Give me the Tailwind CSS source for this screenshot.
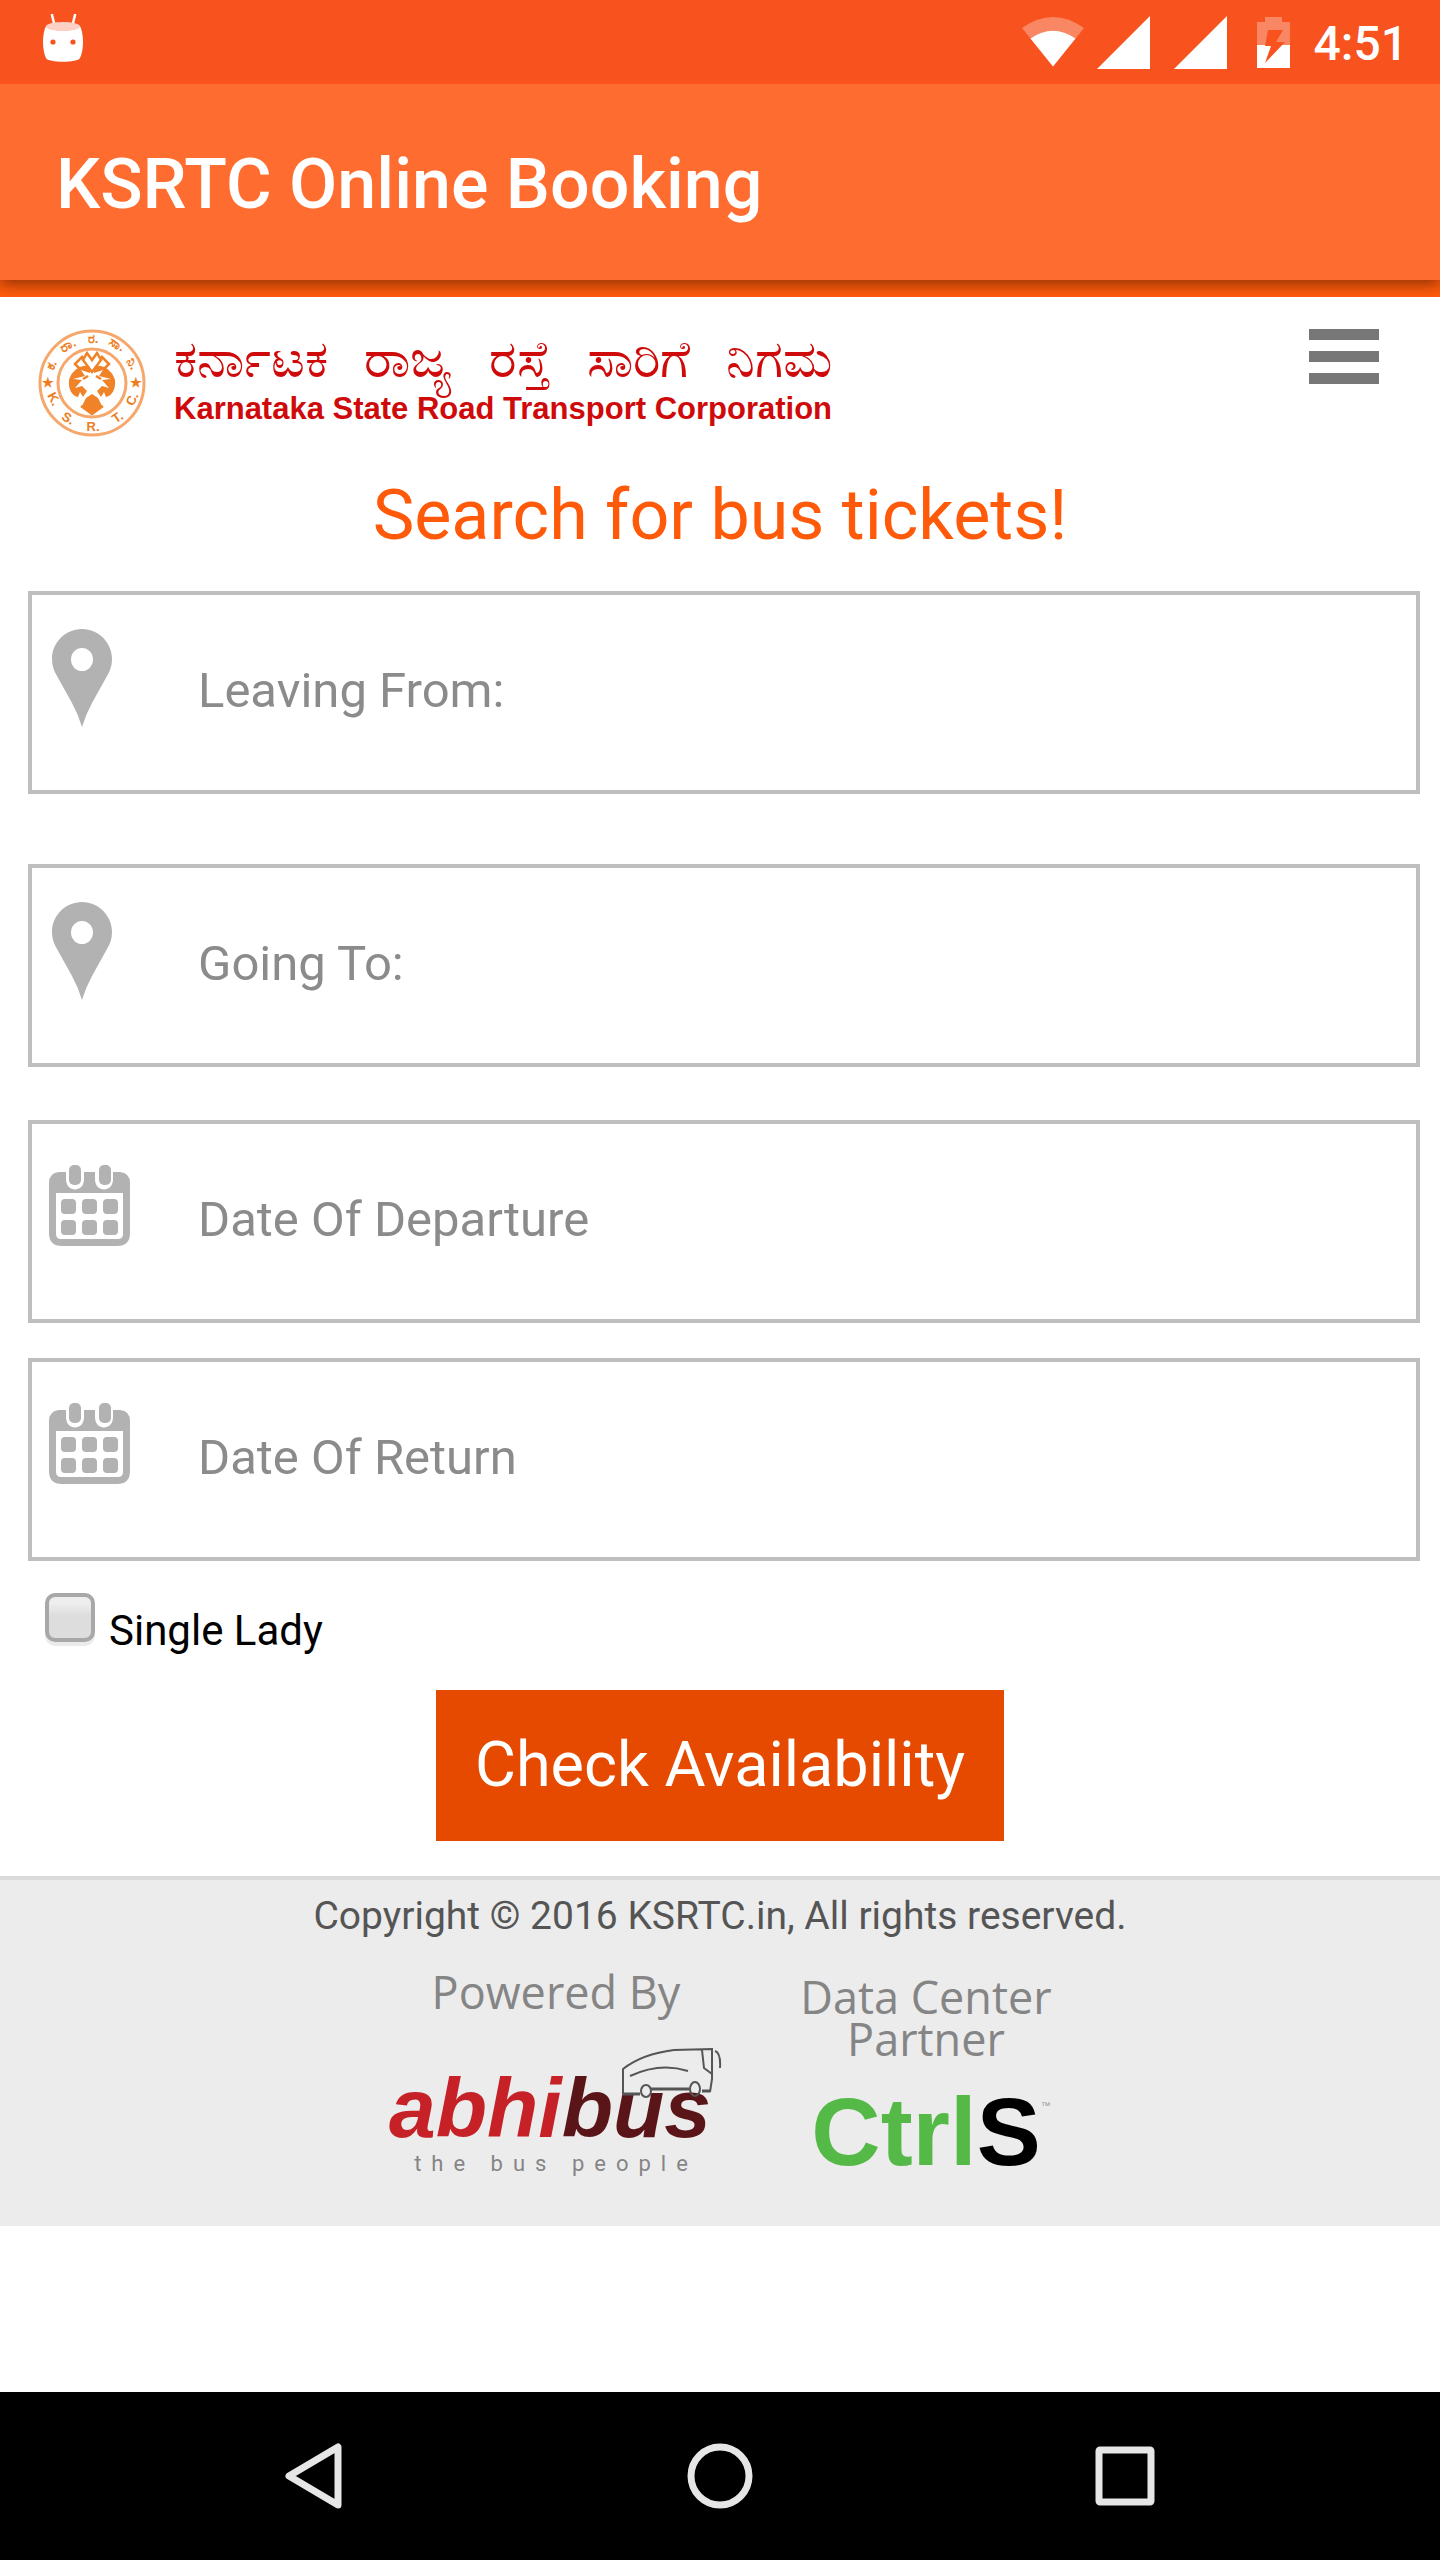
<!DOCTYPE html>
<html lang="en">
<head>
    <meta charset="UTF-8">
    <title>KSRTC Online Booking</title>
    <meta name="viewport" content="width=device-width, initial-scale=1.0">
    <!-- Tailwind CSS -->
    <script src="https://cdn.jsdelivr.net/npm/@tailwindcss/browser@4"></script>
</head>
<body class="bg-white text-black font-[Roboto,sans-serif] flex flex-col min-h-screen">

    <!-- Status bar -->
    <div class="relative z-10 flex items-center h-21 bg-[#f8521e] text-white pl-[43px] pr-8">
        <svg class="w-10 h-12 mb-2" viewBox="0 0 40 48" fill="none">
            <path d="M9 1l2.500 10M32 1l-2.500 10" stroke="#fff" stroke-width="2.500" stroke-linecap="round"/>
            <path d="M3 12C1 16 0 22 0 28s1 12 3 16c2 5 32 5 34 0 2-4 3-10 3-16s-1-12-3-16c-2 6-32 6-34 0z" fill="#fff"/>
            <ellipse cx="20" cy="12.500" rx="17" ry="4.500" fill="#fdd0c3"/>
            <circle cx="10" cy="28" r="2.600" fill="#f8521e"/>
            <circle cx="30" cy="28" r="2.600" fill="#f8521e"/>
        </svg>
        <svg class="w-[62px] h-[50px] ml-auto" viewBox="0 0 62 50">
            <path d="M31 49.500L0 11Q31-11 62 11z" fill="#fa8763"/>
            <path d="M31 49.500L8.500 21.500Q31 6 53.500 21.500z" fill="#fff"/>
        </svg>
        <svg class="w-[53px] h-[53px] ml-[13px]" viewBox="0 0 53 53"><path d="M53 0v53H0z" fill="#fff"/></svg>
        <svg class="w-[53px] h-[53px] ml-6" viewBox="0 0 53 53"><path d="M53 0v53H0z" fill="#fff"/></svg>
        <svg class="w-[33px] h-[51px] ml-[30px]" viewBox="0 0 33 51">
            <path d="M8 0h17v5h8v23H0V5h8z" fill="#fa8763"/>
            <path d="M0 28h33v23H0z" fill="#fff"/>
            <path d="M11 13h15l-7 12h9L8 46l6-17H8z" fill="#f8521e"/>
        </svg>
        <span class="ml-6 pt-1 text-5xl font-medium">4:51</span>
    </div>

    <!-- App bar -->
    <header class="relative flex items-center h-49 bg-[#ff6c30] px-14 pt-1 shadow-[0_4px_14px_rgba(0,0,0,0.45)]">
        <h1 class="text-[70px] leading-20 font-medium text-white">KSRTC Online Booking</h1>
    </header>
    <div class="h-[17px] bg-[#ff5a0a]"></div>

    <!-- Site header -->
    <div class="relative flex items-start justify-between bg-white pl-[38px] pr-[61px] pt-8">
        <a href="#" class="flex items-start gap-7">
            <svg class="w-[108px] h-[108px]" viewBox="0 0 108 108" fill="none">
                <circle cx="54" cy="54" r="52" stroke="#f6a76c" stroke-width="3"/>
                <circle cx="54" cy="54" r="34" stroke="#f6a76c" stroke-width="3"/>
                <!-- two-headed bird -->
                <g fill="#f08228">
                    <path d="M52 38C46 34 34 40 31 51c-1 9 3 16 9 17l2-5 3 5 4-6-5-5-7 2 7-8-9-1 12-3-4-6 9 3z"/>
                    <path d="M56 38c6-4 18 2 21 13 1 9-3 16-9 17l-2-5-3 5-4-6 5-5 7 2-7-8 9-1-12-3 4-6-9 3z"/>
                    <path d="M48 69l6-4 6 4 4 8-6 6h-8l-6-6z"/>
                </g>
                <g stroke="#f08228" stroke-width="2.500">
                    <path d="M54 43l-9-12 4-7 5 7 5-7 4 7zM43 41l-6-6 8-8M65 41l6-6-8-8M50 47l-5 3M58 47l5 3M43 77l11 8 11-8"/>
                </g>
                <g fill="#ee7d20" font-family="Liberation Sans, sans-serif" font-weight="bold" font-size="13" text-anchor="middle">
                    <text transform="translate(12 72) rotate(62)">K.</text>
                    <text transform="translate(28 93) rotate(32)">S.</text>
                    <text transform="translate(55 102)">R.</text>
                    <text transform="translate(82 92) rotate(-34)">T.</text>
                    <text transform="translate(98 72) rotate(-64)">C.</text>
                    <text transform="translate(17 38) rotate(-60)">ಕ.</text>
                    <text transform="translate(32 20) rotate(-28)">ರಾ.</text>
                    <text transform="translate(55 14)">ರ.</text>
                    <text transform="translate(77 19) rotate(30)">ಸಾ.</text>
                    <text transform="translate(91 37) rotate(60)">ನಿ.</text>
                    <text x="10" y="58">★</text>
                    <text x="98" y="58">★</text>
                </g>
            </svg>
            <span class="flex flex-col pt-1 text-[#cf0a0a]">
                <span class="flex justify-between mb-1 text-[52px] leading-[54px]">
                    <span>ಕರ್ನಾಟಕ</span>
                    <span>ರಾಜ್ಯ</span>
                    <span>ರಸ್ತೆ</span>
                    <span>ಸಾರಿಗೆ</span>
                    <span>ನಿಗಮ</span>
                </span>
                <span class="text-[31px] leading-9 font-bold font-[Liberation_Sans,sans-serif] whitespace-nowrap">Karnataka State Road Transport Corporation</span>
            </span>
        </a>
        <button type="button" aria-label="Menu" class="flex flex-col gap-[11px] w-[70px]">
            <span class="h-[11px] w-full bg-[#777]"></span>
            <span class="h-[11px] w-full bg-[#777]"></span>
            <span class="h-[11px] w-full bg-[#777]"></span>
        </button>
    </div>

    <main>
        <h2 class="mt-[38px] text-[70px] leading-20 text-center text-[#ff5a0a]">Search for bus tickets!</h2>

        <form class="mt-9 pl-7 pr-5">
            <div class="flex items-start h-[203px] border-4 border-[#bebebe]">
                <label for="from" aria-label="Leaving From" class="pl-5 pt-[34px]">
                    <svg class="w-[60px] h-[98px]" viewBox="0 0 60 98"><path fill="#b2b2b2" fill-rule="evenodd" d="M30 0C13 0 0 14 0 30c0 7 2 12 5 17l15 27q6 11 10 24 4-13 10-24l15-27c3-5 5-10 5-17C60 14 47 0 30 0zm0 19a11 11.500 0 0 1 0 23 11 11.500 0 0 1 0-23z"/></svg>
                </label>
                <input id="from" type="text" placeholder="Leaving From:" class="flex-1 h-full pl-[86px] pb-1 text-[49px] placeholder:text-[#8b8b8b] outline-none">
            </div>
            <div class="mt-[70px] flex items-start h-[203px] border-4 border-[#bebebe]">
                <label for="to" aria-label="Going To" class="pl-5 pt-[34px]">
                    <svg class="w-[60px] h-[98px]" viewBox="0 0 60 98"><path fill="#b2b2b2" fill-rule="evenodd" d="M30 0C13 0 0 14 0 30c0 7 2 12 5 17l15 27q6 11 10 24 4-13 10-24l15-27c3-5 5-10 5-17C60 14 47 0 30 0zm0 19a11 11.500 0 0 1 0 23 11 11.500 0 0 1 0-23z"/></svg>
                </label>
                <input id="to" type="text" placeholder="Going To:" class="flex-1 h-full pl-[86px] pb-1 text-[49px] placeholder:text-[#8b8b8b] outline-none">
            </div>
            <div class="mt-[53px] flex items-start h-[203px] border-4 border-[#bebebe]">
                <label for="departure" aria-label="Date Of Departure" class="pl-[17px] pt-[41px]">
                    <svg class="w-[81px] h-[81px]" viewBox="0 0 81 81" fill="#b2b2b2">
                        <path fill-rule="evenodd" d="M10 7H17v7c0 14 18 14 18 0V7h11v7c0 14 18 14 18 0V7h7q10 1 10 11v50q0 13-13 13H13Q0 81 0 68V18Q0 8 10 7zM7 28v41q0 5 5 5h57q5 0 5-5V28z"/>
                        <rect x="20" width="12" height="20" rx="5"/><rect x="50" width="12" height="20" rx="5"/>
                        <rect x="12" y="34" width="15" height="15" rx="4"/><rect x="33" y="34" width="15" height="15" rx="4"/><rect x="54" y="34" width="15" height="15" rx="4"/>
                        <rect x="12" y="55" width="15" height="15" rx="4"/><rect x="33" y="55" width="15" height="15" rx="4"/><rect x="54" y="55" width="15" height="15" rx="4"/>
                    </svg>
                </label>
                <input id="departure" type="text" placeholder="Date Of Departure" class="flex-1 h-full pl-17 pb-1 text-[49px] placeholder:text-[#8b8b8b] outline-none">
            </div>
            <div class="mt-[35px] flex items-start h-[203px] border-4 border-[#bebebe]">
                <label for="return" aria-label="Date Of Return" class="pl-[17px] pt-[41px]">
                    <svg class="w-[81px] h-[81px]" viewBox="0 0 81 81" fill="#b2b2b2">
                        <path fill-rule="evenodd" d="M10 7H17v7c0 14 18 14 18 0V7h11v7c0 14 18 14 18 0V7h7q10 1 10 11v50q0 13-13 13H13Q0 81 0 68V18Q0 8 10 7zM7 28v41q0 5 5 5h57q5 0 5-5V28z"/>
                        <rect x="20" width="12" height="20" rx="5"/><rect x="50" width="12" height="20" rx="5"/>
                        <rect x="12" y="34" width="15" height="15" rx="4"/><rect x="33" y="34" width="15" height="15" rx="4"/><rect x="54" y="34" width="15" height="15" rx="4"/>
                        <rect x="12" y="55" width="15" height="15" rx="4"/><rect x="33" y="55" width="15" height="15" rx="4"/><rect x="54" y="55" width="15" height="15" rx="4"/>
                    </svg>
                </label>
                <input id="return" type="text" placeholder="Date Of Return" class="flex-1 h-full pl-17 pb-1 text-[49px] placeholder:text-[#8b8b8b] outline-none">
            </div>

            <div class="flex items-start mt-8 pl-[17px]">
                <input id="lady" type="checkbox" class="appearance-none w-[50px] h-[49px] rounded-[10px] border-4 border-[#a8a8a8] bg-linear-to-b from-[#eeeeee] from-15% to-[#dddddd] to-45% shadow-[0_4px_0_#ebebeb]">
                <label for="lady" class="ml-3.5 mt-3.5 text-[42px] leading-12">Single Lady</label>
            </div>

            <div class="flex justify-center mt-[35px] pr-2">
                <button type="submit" class="px-[39px] h-[151px] bg-[#e54a00] text-white text-[63px]">Check Availability</button>
            </div>
        </form>
    </main>

    <footer class="mt-[35px] h-[350px] bg-[#ececec] border-t-4 border-[#dadada] pt-3">
        <p class="text-[39px] leading-12 text-center text-[#555]">Copyright © 2016 KSRTC.in, All rights reserved.</p>
        <div class="flex justify-center gap-[72px] mt-6 font-[Open_Sans,sans-serif] text-[#858585]">
            <a href="#" class="relative flex flex-col items-center w-[340px]">
                <span class="text-[45px] leading-14">Powered By</span>
                <span class="mt-12 pr-3 text-[84px] leading-20 font-bold italic font-[Liberation_Sans,sans-serif] text-[#c62127]">abhi<span class="text-[#5a1518]">bus</span></span>
                <span class="mt-1 text-[22px] leading-6 font-[Roboto,sans-serif] tracking-[10px] whitespace-nowrap">the bus people</span>
                <svg class="absolute right-0 top-[84px] w-[104px] h-[50px]" viewBox="0 0 104 50" fill="none" stroke="#555" stroke-width="2">
                    <path d="M1 46V21Q20 6 52 2l38-1v30l-2 13M80 2l2 18 8 6M93 3q6 2 5 17M8 28q30-14 58-5" />
                    <path d="M1 46h17M29 41h38M80 43h8" stroke-width="3"/>
                    <ellipse cx="24" cy="43" rx="5" ry="6"/><ellipse cx="73" cy="41" rx="5" ry="7"/>
                </svg>
            </a>
            <a href="#" class="flex flex-col items-center w-[256px] pt-1">
                <span class="text-[45px] leading-[42px] text-center mt-2">Data Center Partner</span>
                <span class="relative mt-6 text-[96px] leading-24 font-bold font-[Liberation_Sans,sans-serif] text-[#55b947]">Ctrl<span class="text-black">S</span><span class="absolute left-full top-4 text-[10px] leading-3 font-normal text-[#999]">™</span></span>
            </a>
        </div>
    </footer>

    <!-- Navigation bar -->
    <nav class="mt-auto flex items-center justify-center h-42 bg-black">
        <button type="button" aria-label="Back">
            <svg class="w-17 h-17" viewBox="0 0 68 68" fill="none"><path d="M57 5v58L8 34z" stroke="#e6e6e6" stroke-width="7" stroke-linejoin="round"/></svg>
        </button>
        <button type="button" aria-label="Home" class="mx-[337px]">
            <svg class="w-17 h-17" viewBox="0 0 68 68" fill="none"><circle cx="34" cy="34" r="29" stroke="#e6e6e6" stroke-width="7"/></svg>
        </button>
        <button type="button" aria-label="Recent apps">
            <svg class="w-17 h-17" viewBox="0 0 68 68" fill="none"><rect x="8" y="8" width="52" height="52" rx="1" stroke="#e6e6e6" stroke-width="7" stroke-linejoin="round"/></svg>
        </button>
    </nav>
</body>
</html>
